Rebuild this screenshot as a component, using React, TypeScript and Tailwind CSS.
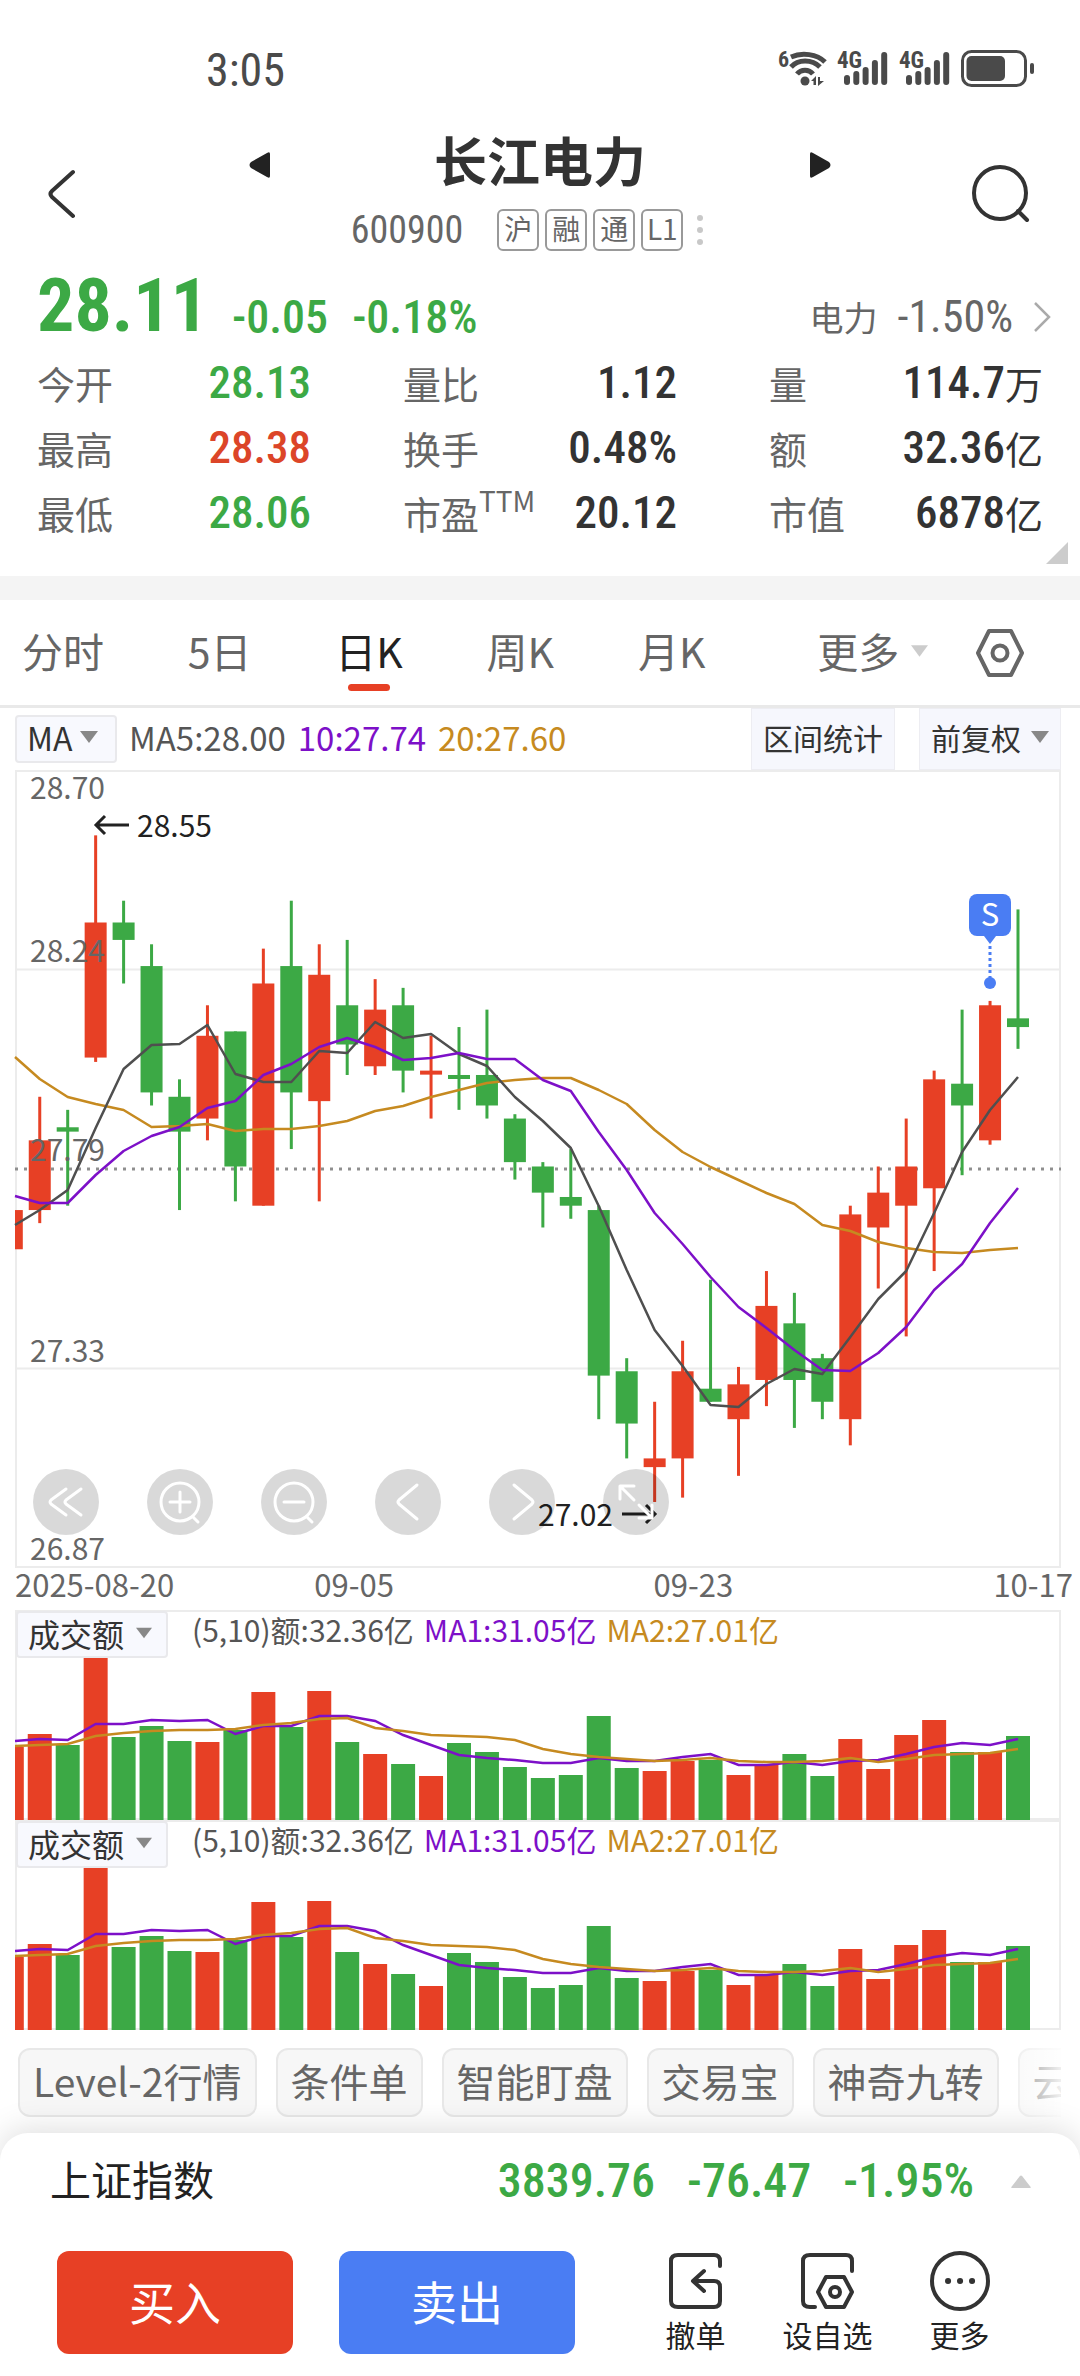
import React, { useState } from "react";

const RED = "#e74025";
const GREEN = "#3ca945";
const PURPLE = "#7d10c8";
const GOLD = "#c68a20";
const GREY = "#4f4f4f";

const STEP = 27.95;
const FIRST = -3.2;
const cx = (i: number) => FIRST + i * STEP;

type Candle = [up: 0 | 1, top: number, bottom: number, high: number, low: number];

// Distances in cents below the upper bound of the price axis (28.70).
const CANDLES: Candle[] = [
  [1, 101, 110, 101, 110],
  [1, 85, 101, 75, 104],
  [0, 82, 83, 78, 100],
  [1, 35, 66, 15, 67],
  [0, 35, 39, 30, 49],
  [0, 45, 74, 40, 77],
  [0, 75, 83, 71, 101],
  [1, 61, 80, 54, 85],
  [0, 60, 91, 60, 99],
  [1, 49, 100, 41, 100],
  [0, 45, 74, 30, 87],
  [1, 47, 76, 40, 99],
  [0, 54, 63, 39, 70],
  [1, 55, 68, 48, 70],
  [0, 54, 69, 50, 74],
  [1, 69, 69, 61, 80],
  [0, 70, 70, 59, 78],
  [0, 70, 77, 55, 80],
  [0, 80, 90, 79, 94],
  [0, 91, 97, 90, 105],
  [0, 98, 100, 87, 103],
  [0, 101, 139, 100, 149],
  [0, 138, 150, 135, 158],
  [1, 158, 160, 145, 168],
  [1, 138, 158, 131, 167],
  [0, 142, 145, 117, 145],
  [1, 141, 149, 137, 162],
  [1, 123, 140, 115, 146],
  [0, 127, 140, 120, 151],
  [0, 135, 145, 134, 149],
  [1, 102, 149, 100, 155],
  [1, 97, 105, 91, 119],
  [1, 91, 100, 80, 130],
  [1, 71, 96, 69, 115],
  [0, 72, 77, 55, 93],
  [1, 54, 85, 53, 86],
  [0, 57, 59, 32, 64],
];

const MA5 = [455, 440, 420, 358, 299, 275, 274, 255, 304, 312, 312, 281, 283, 252, 268, 264, 284, 296, 327, 351, 378, 436, 500, 560, 596, 635, 637, 614, 599, 604, 567, 529, 501, 443, 382, 340, 307];
const MA10 = [426, 433, 433, 405, 381, 366, 357, 338, 331, 305, 294, 277, 268, 277, 290, 288, 283, 289, 289, 310, 321, 362, 400, 443, 474, 507, 537, 558, 580, 600, 601, 583, 557, 520, 494, 453, 418];
const MA20 = [287, 309, 327, 334, 340, 357, 356, 354, 361, 359, 359, 356, 351, 341, 336, 327, 320, 313, 310, 308, 308, 320, 334, 360, 382, 397, 410, 423, 434, 455, 461, 472, 478, 482, 483, 480, 478];

const VOLUMES = [73, 86, 75, 162, 83, 94, 79, 78, 90, 128, 93, 129, 78, 66, 56, 44, 77, 68, 53, 42, 45, 104, 52, 49, 59, 60, 45, 56, 66, 44, 81, 51, 85, 100, 68, 68, 84];
const VOL_MA5 = [131, 129, 130, 114, 114, 110, 111, 110, 124, 116, 116, 106, 106, 111, 125, 135, 145, 148, 150, 153, 153, 148, 151, 151, 147, 144, 155, 155, 152, 155, 151, 150, 144, 137, 133, 135, 129];
const VOL_MA10 = [136, 135, 134, 126, 123, 121, 120, 120, 119, 115, 113, 109, 108, 118, 121, 125, 126, 127, 130, 139, 144, 147, 149, 151, 150, 148, 151, 152, 152, 151, 148, 152, 149, 145, 144, 143, 139];

const points = (ys: number[]) => ys.map((y, i) => `${i === 0 ? 0 : cx(i)},${y}`).join(" ");

// A bar centred on the i-th day, cut at the left edge of the plot.
function Bar({ i, half, y, h }: { i: number; half: number; y: number; h: number }) {
  const left = Math.max(cx(i) - half, 0);
  const right = cx(i) + half;
  return right > left ? <rect x={left} y={y} width={right - left} height={h} /> : null;
}

const NUM = "font-['Roboto_Condensed','Noto_Sans_CJK_SC',sans-serif]";

function Caret({ className, up = false }: { className: string; up?: boolean }) {
  return (
    <svg viewBox="0 0 18 12" className={className} fill="currentColor" aria-hidden="true">
      <path d={up ? "M1 12Q-1 12 1 10L8 1Q9 0 10 1L17 10Q19 12 17 12Z" : "M0 0H18L9 12Z"} />
    </svg>
  );
}

function StatusBar() {
  const signal = (x: number) => (
    <g key={x}>
      <text x={x} y="18" fontSize="23" fontWeight="700">4G</text>
      {[25, 21, 17, 10, 2].map((y, k) => (
        <rect key={y} x={x + 7 + k * 9.3} y={y} width="6" height={35 - y} rx="3" />
      ))}
    </g>
  );
  return (
    <div className="flex h-[136px] items-center justify-between pt-1 pr-[43px] pl-[206px] text-[#4a4a4a]">
      <span className={`${NUM} text-[46px] leading-none`}>3:05</span>
      <svg viewBox="0 0 258 40" className={`h-[40px] w-[258px] overflow-visible ${NUM}`} fill="#4a4a4a" aria-label="信号与电量">
        <text x="-1" y="17" fontSize="22" fontWeight="700">6</text>
        <g fill="none" stroke="#4a4a4a" strokeWidth="5">
          <path d="M12 7C23 2 38 4 46 12" />
          <path d="M12 17C19 9 33 9 41 17" />
          <path d="M18 24C22 19 30 19 34 24" />
        </g>
        <circle cx="26" cy="31" r="4.500" />
        <path d="M32 31L37 26V35H34.500V31ZM39 27H41V31H45L39 36Z" />
        {signal(58)}
        {signal(120)}
        <rect x="183.500" y="1.500" width="63" height="34" rx="9" fill="none" stroke="#4a4a4a" strokeWidth="3" />
        <rect x="187.500" y="6" width="38.500" height="25" rx="5" />
        <rect x="251" y="13" width="4" height="11" rx="2" />
      </svg>
    </div>
  );
}

function Header() {
  return (
    <header className="flex h-[116px] items-center justify-between pr-[50px] pl-[40px]">
      <button type="button" aria-label="返回" className="flex h-16 w-[74px] items-center pl-2">
        <svg viewBox="0 0 28 50" className="h-[50px] w-[28px]" fill="none" stroke="#333" strokeWidth="4" strokeLinecap="round" strokeLinejoin="round">
          <path d="M25 3L4 22Q1 25 4 28L25 47" />
        </svg>
      </button>
      <div className="flex w-[582px] flex-col">
        <div className="flex h-[52px] items-center justify-between text-[#222]">
          <button type="button" aria-label="上一只" className="pt-1">
            <svg viewBox="0 0 21 28" className="h-[28px] w-[21px]" fill="currentColor"><path d="M21 3V25Q21 28 18 26L2 17Q-1 14 2 11L18 2Q21 0 21 3Z" /></svg>
          </button>
          <h1 className="pb-2 text-[53px] leading-[44px] font-bold text-[#333]">长江电力</h1>
          <button type="button" aria-label="下一只" className="pt-1">
            <svg viewBox="0 0 21 28" className="h-[28px] w-[21px]" fill="currentColor"><path d="M0 3V25Q0 28 3 26L19 17Q22 14 19 11L3 2Q0 0 0 3Z" /></svg>
          </button>
        </div>
        <div className="mt-5 flex h-[42px] items-center justify-center gap-[6px] pr-[26px] text-[#666]">
          <span className={`${NUM} mr-7 text-[38px] leading-none`}>600900</span>
          {["沪", "融", "通", "L1"].map((t) => (
            <span key={t} className="flex h-[42px] w-[42px] items-center justify-center rounded-md border-2 border-[#999] pb-1 text-[28px] leading-none">{t}</span>
          ))}
          <span className="ml-2 flex flex-col gap-[6px]">
            {[0, 1, 2].map((k) => <i key={k} className="size-[6px] rounded-full bg-[#c8c8c8]" />)}
          </span>
        </div>
      </div>
      <button type="button" aria-label="搜索" className="flex h-16 w-[64px] items-center justify-end">
        <svg viewBox="0 0 58 58" className="size-[58px]" fill="none" stroke="#333" strokeWidth="4" strokeLinecap="round">
          <circle cx="28" cy="28" r="26" />
          <path d="M46 46L55 55" />
        </svg>
      </button>
    </header>
  );
}

type Stat = { label: string; sup?: string; value: string; unit?: string; tone?: string };
const STATS: Stat[] = [
  { label: "今开", value: "28.13", tone: "text-[#3ca945]" },
  { label: "量比", value: "1.12" },
  { label: "量", value: "114.7", unit: "万" },
  { label: "最高", value: "28.38", tone: "text-[#dc4528]" },
  { label: "换手", value: "0.48%" },
  { label: "额", value: "32.36", unit: "亿" },
  { label: "最低", value: "28.06", tone: "text-[#3ca945]" },
  { label: "市盈", sup: "TTM", value: "20.12" },
  { label: "市值", value: "6878", unit: "亿" },
];

function Quote() {
  return (
    <section className="relative h-[324px] px-[37px] pt-5">
      <div className="flex h-[68px] items-end text-[#3ca945]">
        <span className={`${NUM} text-[74px] leading-[68px] font-bold`}>28.11</span>
        <span className={`${NUM} ml-6 flex gap-6 text-[46px] leading-[46px] font-medium`}>
          <span>-0.05</span>
          <span>-0.18%</span>
        </span>
        <a href="#sector" className="-mr-2 ml-auto flex items-center text-[#666]">
          <span className="mr-5 text-[34px] leading-[46px]">电力</span>
          <span className={`${NUM} text-[44px] leading-[46px]`}>-1.50%</span>
          <svg viewBox="0 0 18 30" className="ml-5 h-[30px] w-[18px]" fill="none" stroke="#aaa" strokeWidth="2.500"><path d="M2 1L16 15L2 29" /></svg>
        </a>
      </div>
      <dl className="mt-[10px] grid grid-cols-[274fr_274fr_274fr] gap-x-[92px]">
        {STATS.map((s) => (
          <div key={s.label} className="flex h-[65px] items-center justify-between">
            <dt className="flex text-[38px] leading-[62px] text-[#666]">
              {s.label}
              {s.sup && <sup className="top-0 text-[28px] leading-[36px]">{s.sup}</sup>}
            </dt>
            <dd className={`${s.tone ?? "text-[#333]"} flex items-center`}>
              <span className={`${NUM} text-[45px] leading-[64px] font-medium`}>{s.value}</span>
              {s.unit && <span className="text-[38px] leading-[62px]">{s.unit}</span>}
            </dd>
          </div>
        ))}
      </dl>
      <svg viewBox="0 0 22 22" className="absolute right-3 bottom-3 size-[22px]" fill="#ccc" aria-hidden="true"><path d="M22 0V22H0Z" /></svg>
    </section>
  );
}

function PeriodTabs() {
  const [active, setActive] = useState("日K");
  return (
    <nav className="flex h-[108px] items-center justify-between border-b-3 border-[#e9e9e9] pr-[56px] pl-[22px] text-[41px] text-[#666]">
      {["分时", "5日", "日K", "周K", "月K"].map((t) => (
        <button key={t} type="button" onClick={() => setActive(t)} className={`relative flex h-full items-center pb-1 ${active === t ? "text-[#222]" : ""}`}>
          {t}
          {active === t && <i className="absolute bottom-[14px] left-1/2 h-[7px] w-[42px] -translate-x-1/2 rounded-full bg-[#e74025]" />}
        </button>
      ))}
      <button type="button" className="ml-7 flex items-center gap-3 pb-1">
        更多
        <Caret className="h-[12px] w-[17px] text-[#ccc]" />
      </button>
      <button type="button" aria-label="设置" className="-ml-9">
        <svg viewBox="0 0 48 48" className="size-[48px]" fill="none" stroke="#666" strokeWidth="4" strokeLinejoin="round">
          <path d="M13 2H35L46 24L35 46H13L2 24Z" />
          <circle cx="24" cy="24" r="7.500" />
        </svg>
      </button>
    </nav>
  );
}

function CandleChart() {
  const y = (c: number) => c * 4.357;
  return (
    <svg viewBox="0 0 1046 798" className="block w-full overflow-visible" role="img" aria-label="日K线图">
      <g stroke="#ececec" strokeWidth="2" fill="none">
        <rect x="1" y="1" width="1044" height="796" />
        <path d="M0 199.500H1046M0 598.500H1046" />
      </g>
      <path d="M0 399H1046" stroke="#8f8f8f" strokeWidth="3" strokeDasharray="3 6" />
      {CANDLES.map(([up, top, bottom, high, low], i) => (
        <g key={i} fill={up ? RED : GREEN}>
          <Bar i={i} half={1.5} y={y(high)} h={y(low) - y(high)} />
          <Bar i={i} half={11} y={y(top)} h={Math.max(y(bottom) - y(top), 4)} />
        </g>
      ))}
      <g fill="none" strokeWidth="2.500" strokeLinejoin="round">
        <polyline points={points(MA20)} stroke={GOLD} />
        <polyline points={points(MA5)} stroke={GREY} />
        <polyline points={points(MA10)} stroke={PURPLE} />
      </g>
      <g fontSize="30" fill="#666">
        <text x="15" y="29">28.70</text>
        <text x="15" y="192">28.24</text>
        <text x="15" y="391">27.79</text>
        <text x="15" y="592">27.33</text>
        <text x="15" y="790">26.87</text>
      </g>
      <g fontSize="30" fill="#222">
        <text x="122" y="67">28.55</text>
        <text x="523" y="756">27.02</text>
      </g>
      <g fill="none" stroke="#222" strokeWidth="3">
        <path d="M114 55H81M90 46L81 55L90 64" />
        <path d="M607 744H640M631 735L640 744L631 753" />
      </g>
      <g fill="#4a7df3">
        <rect x="954" y="124" width="42" height="42" rx="8" />
        <path d="M969 166H981L975 174Z" />
        <path d="M975 176V208" stroke="#4a7df3" strokeWidth="3" strokeDasharray="3 3" />
        <circle cx="975" cy="213" r="6" />
        <text x="975" y="156" fontSize="31" fill="#fff" textAnchor="middle">S</text>
      </g>
    </svg>
  );
}

const TOOLS: { label: string; icon: React.ReactNode }[] = [
  { label: "最早", icon: <path d="M33 20L18 31Q16 33 18 35L33 46M48 20L33 31Q31 33 33 35L48 46" /> },
  { label: "放大", icon: <><circle cx="33" cy="33" r="19" /><path d="M33 23V43M23 33H43M46 48L51 53" /></> },
  { label: "缩小", icon: <><circle cx="33" cy="33" r="19" /><path d="M23 33H43M46 48L51 53" /></> },
  { label: "向左", icon: <path d="M42 16L24 31Q22 33 24 35L42 50" /> },
  { label: "向右", icon: <path d="M25 16L43 31Q45 33 43 35L25 50" /> },
  { label: "全屏", icon: <path d="M17 30V17H31M18 18L31 31M36 36L48 48M49 36V49H36" /> },
];

function ChartPanel() {
  return (
    <section className="px-[15px] pr-[19px]">
      <div className="flex h-[62px] items-center">
        <button type="button" className="flex h-[48px] w-[102px] items-center gap-2 rounded-sm border-2 border-[#e9e9ec] bg-[#f8f9fe] pb-1 pl-[10px] text-[32px] text-[#333]">
          MA <Caret className="h-[12px] w-[18px] text-[#888]" />
        </button>
        <p className="ml-3 flex gap-3 pb-1 text-[33px] leading-none text-[#555]">
          <span>MA5:28.00</span>
          <span className="text-[#7d10c8]">10:27.74</span>
          <span className="text-[#c68a20]">20:27.60</span>
        </p>
        <button type="button" className="ml-auto h-full border border-[#ededf2] bg-[#f6f7fd] px-[11px] pb-1 text-[30px] text-[#333]">区间统计</button>
        <button type="button" className="ml-6 flex h-full items-center gap-[10px] border border-[#ededf2] bg-[#f6f7fd] px-[11px] pb-1 text-[30px] text-[#333]">
          前复权 <Caret className="h-[12px] w-[18px] text-[#888]" />
        </button>
      </div>
      <div className="relative">
        <CandleChart />
        <div className="absolute bottom-[33px] left-[18px] flex gap-12">
          {TOOLS.map((t) => (
            <button key={t.label} type="button" aria-label={t.label} className="size-[66px] rounded-full bg-black/15">
              <svg viewBox="0 0 66 66" className="size-[66px]" fill="none" stroke="#fff" strokeWidth="3" strokeLinecap="round" strokeLinejoin="round">{t.icon}</svg>
            </button>
          ))}
        </div>
      </div>
      <div className="-mr-[12px] grid h-[42px] grid-cols-[299fr_339fr_419fr] items-start text-[31px] leading-[31px] text-[#666]">
        <span>2025-08-20</span>
        <span>09-05</span>
        <span className="flex justify-between"><span>09-23</span><span>10-17</span></span>
      </div>
    </section>
  );
}

function VolumePanel() {
  return (
    <section className="relative mr-[19px] ml-[15px]">
      <svg viewBox="0 0 1046 210" className="block w-full" role="img" aria-label="成交额">
        <path d="M1 210V1H1045V209H0" fill="none" stroke="#ececec" strokeWidth="2" />
        {VOLUMES.map((v, i) => (
          <g key={i} fill={CANDLES[i][0] ? RED : GREEN}>
            <Bar i={i} half={12} y={210 - v} h={v} />
          </g>
        ))}
        <g fill="none" strokeWidth="2.500">
          <polyline points={points(VOL_MA5)} stroke={PURPLE} />
          <polyline points={points(VOL_MA10)} stroke={GOLD} />
        </g>
      </svg>
      <div className="absolute top-px left-px flex items-start">
        <button type="button" className="flex h-[47px] w-[152px] items-center gap-3 rounded-sm border-2 border-[#e9e9ec] bg-[#f8f9fe] pb-1 pl-[10px] text-[32px] text-[#333]">
          成交额 <Caret className="h-[12px] w-[16px] text-[#888]" />
        </button>
        <p className="ml-6 flex gap-[10px] text-[30px] leading-[37px] text-[#555]">
          <span>(5,10)额:32.36亿</span>
          <span className="text-[#7d10c8]">MA1:31.05亿</span>
          <span className="text-[#c68a20]">MA2:27.01亿</span>
        </p>
      </div>
    </section>
  );
}

function Chips() {
  return (
    <div className="relative mr-[19px] flex h-[103px] gap-[19px] overflow-hidden pt-[18px] pl-[18px]">
      {["Level-2行情", "条件单", "智能盯盘", "交易宝", "神奇九转", "云参数"].map((t) => (
        <button key={t} type="button" className="flex h-[69px] shrink-0 items-center rounded-xl border-2 border-[#e8e8e8] bg-[#f7f7f7] px-[13px] pb-1 text-[39px] whitespace-nowrap text-[#666]">{t}</button>
      ))}
      <div className="pointer-events-none absolute inset-y-0 right-0 w-[56px] bg-linear-to-r from-white/20 to-white/90" />
    </div>
  );
}

const ACTIONS = [
  {
    label: "撤单",
    icon: <path d="M54 15V10Q54 4 48 4H12Q5 4 5 10V50Q5 56 12 56H48Q54 56 54 50V36Q54 30 48 30H27M38 20L27 30L38 40" />,
  },
  {
    label: "设自选",
    icon: <><path d="M54 20V10Q54 4 48 4H12Q5 4 5 10V50Q5 56 12 56H17" /><path d="M28 26H46L54 41L46 56H28L20 41Z" /><circle cx="37" cy="41" r="5" /></>,
  },
  {
    label: "更多",
    icon: <><circle cx="30" cy="30" r="28" /><path d="M18 30H18.100M30 30H30.100M42 30H42.100" strokeWidth="6" /></>,
  },
];

function BottomSheet() {
  return (
    <footer className="relative rounded-t-[28px] bg-white shadow-[0_-4px_32px_rgba(0,0,0,0.13)]">
      <a href="#index" className="flex h-[96px] items-center pr-[48px] pl-[50px]">
        <span className="pb-1 text-[41px] text-[#222]">上证指数</span>
        <span className={`${NUM} ml-auto flex gap-8 text-[48px] leading-none font-medium text-[#3ca945]`}>
          <span>3839.76</span>
          <span>-76.47</span>
          <span>-1.95%</span>
        </span>
        <Caret up className="ml-9 h-[13px] w-[22px] text-[#ccc]" />
      </a>
      <div className="flex items-start pt-[22px] pr-[74px] pb-[22px] pl-[57px]">
        <button type="button" className="h-[103px] flex-1 rounded-xl bg-[#e74025] pb-1 text-[46px] text-white">买入</button>
        <button type="button" className="ml-[46px] h-[103px] flex-1 rounded-xl bg-[#4a7df3] pb-1 text-[46px] text-white">卖出</button>
        <div className="ml-[74px] flex gap-[39px]">
          {ACTIONS.map((a) => (
            <button key={a.label} type="button" className="flex w-[93px] flex-col items-center gap-1 text-[30px] leading-[38px] text-[#222]">
              <svg viewBox="0 0 60 60" className="size-[60px]" fill="none" stroke="#333" strokeWidth="4" strokeLinecap="round" strokeLinejoin="round">{a.icon}</svg>
              {a.label}
            </button>
          ))}
        </div>
      </div>
    </footer>
  );
}

export default function App() {
  return (
    <main lang="zh-CN" className="min-h-screen overflow-hidden bg-white font-['Noto_Sans_CJK_SC',sans-serif]">
      <StatusBar />
      <Header />
      <Quote />
      <div className="h-6 bg-[#f4f4f4]" />
      <PeriodTabs />
      <ChartPanel />
      <VolumePanel />
      <VolumePanel />
      <Chips />
      <BottomSheet />
    </main>
  );
}
